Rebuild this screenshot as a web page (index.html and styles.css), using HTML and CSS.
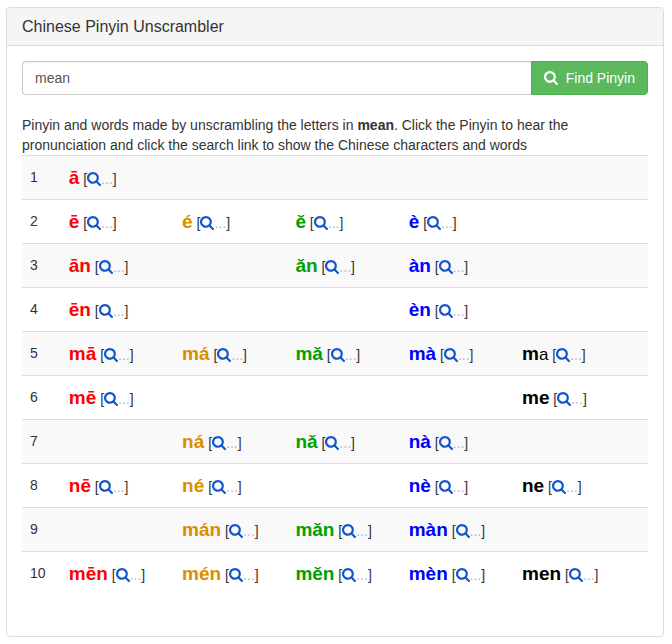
FILE: index.html
```html
<!DOCTYPE html>
<html lang="en">
<head>
<meta charset="utf-8">
<title>Chinese Pinyin Unscrambler</title>
<link rel="stylesheet" href="styles.css">
</head>
<body>
<svg class="sprite" aria-hidden="true">
  <symbol id="search" viewBox="0 0 1664 1664"><path fill="currentColor" d="M1152 704q0-185-131.500-316.500T704 256 387.500 387.500 256 704t131.500 316.500T704 1152t316.500-131.500T1152 704zm512 832q0 52-38 90t-90 38q-54 0-90-38l-343-342q-179 124-399 124-143 0-273.500-55.500t-225-150-150-225T0 704t55.500-273.500 150-225 225-150T704 0t273.500 55.500 225 150 150 225T1408 704q0 220-124 399l343 343q37 37 37 90z"/></symbol>
</svg>
<main class="panel">
  <h1 class="panel-heading">Chinese Pinyin Unscrambler</h1>
  <div class="panel-body">
    <form class="search-form">
      <input class="search-input" type="text" value="mean" aria-label="Letters">
      <button class="search-button" type="button"><svg class="button-icon"><use href="#search"/></svg>Find Pinyin</button>
    </form>
    <p class="intro">Pinyin and words made by unscrambling the letters in <strong>mean</strong>. Click the Pinyin to hear the pronunciation and click the search link to show the Chinese characters and words</p>
    <table class="results">
      <colgroup><col class="col-number"><col class="col-tone"><col class="col-tone"><col class="col-tone"><col class="col-tone"><col></colgroup>
      <tbody id="rows"></tbody>
    </table>
  </div>
</main>
<script src="script.js"></script>
</body>
</html>
```
FILE: script.js
```js
const rows = [
  ["ā", "", "", "", ""],
  ["ē", "é", "ě", "è", ""],
  ["ān", "", "ǎn", "àn", ""],
  ["ēn", "", "", "èn", ""],
  ["mā", "má", "mǎ", "mà", "m<span class=\"plain\">a</span>"],
  ["mē", "", "", "", "me"],
  ["", "ná", "nǎ", "nà", ""],
  ["nē", "né", "", "nè", "ne"],
  ["", "mán", "mǎn", "màn", ""],
  ["mēn", "mén", "měn", "mèn", "men"]
];

function cell(word, tone) {
  if (!word) return "<td></td>";
  return `<td><a href="#" class="pinyin tone-${tone}">${word}</a> [<a href="#" class="lookup" aria-label="Search"><svg class="lookup-icon"><use href="#search"/></svg><span class="dots">...</span></a>]</td>`;
}

document.getElementById("rows").innerHTML = rows
  .map((words, i) => `<tr><td>${i + 1}</td>${words.map((w, t) => cell(w, t + 1)).join("")}</tr>`)
  .join("");
```
FILE: styles.css
```css
* { box-sizing: border-box; }
body {
  margin: 7px 8px 8px 6px;
  background: #fff;
  color: #333;
  font: 14px/20px "Liberation Sans", Arial, sans-serif;
}
a { text-decoration: none; }
.sprite { display: none; }
.panel {
  border: 1px solid #ddd;
  border-radius: 4px;
  box-shadow: 0 1px 1px rgba(0, 0, 0, .05);
}
.panel-heading {
  margin: 0;
  padding: 10px 15px;
  border-bottom: 1px solid #ddd;
  border-radius: 3px 3px 0 0;
  background: #f5f5f5;
  font-size: 16px;
  font-weight: 400;
  line-height: 17px;
}
.panel-body { padding: 15px 15px 40px; }
.search-form { display: flex; margin-bottom: 20px; }
.search-input {
  flex: 1;
  min-width: 0;
  height: 34px;
  padding: 6px 12px;
  border: 1px solid #ccc;
  border-right: 0;
  border-radius: 4px 0 0 4px;
  box-shadow: inset 0 1px 1px rgba(0, 0, 0, .075);
  color: #555;
  font: inherit;
}
.search-button {
  display: flex;
  align-items: center;
  gap: 8px;
  height: 34px;
  padding: 6px 12px;
  border: 1px solid #4cae4c;
  border-radius: 0 4px 4px 0;
  background: #5cb85c;
  color: #fff;
  font: inherit;
}
.button-icon { width: 14px; height: 14px; }
.intro { margin: 0; }
.results {
  width: 100%;
  border-collapse: collapse;
  table-layout: fixed;
}
.col-number { width: 6.2%; }
.col-tone { width: 18.1%; }
.results td {
  height: 44px;
  padding: 8px;
  border-top: 1px solid #ddd;
  line-height: 20px;
  vertical-align: top;
  white-space: nowrap;
}
.results td:first-child { line-height: 27px; }
.results tr:nth-child(odd) { background: #f9f9f9; }
.pinyin { font-size: 19px; font-weight: 700; line-height: 27px; }
.plain { font-size: 17px; font-weight: 400; line-height: 20px; }
.tone-1 { color: #f00; }
.tone-2 { color: #d98e00; }
.tone-3 { color: #00a000; }
.tone-4 { color: #00f; }
.tone-5 { color: #000; }
.lookup { color: #1155cc; }
.lookup-icon { width: 14px; height: 14px; vertical-align: -2px; }
.dots { color: #a0bedd; }
```
